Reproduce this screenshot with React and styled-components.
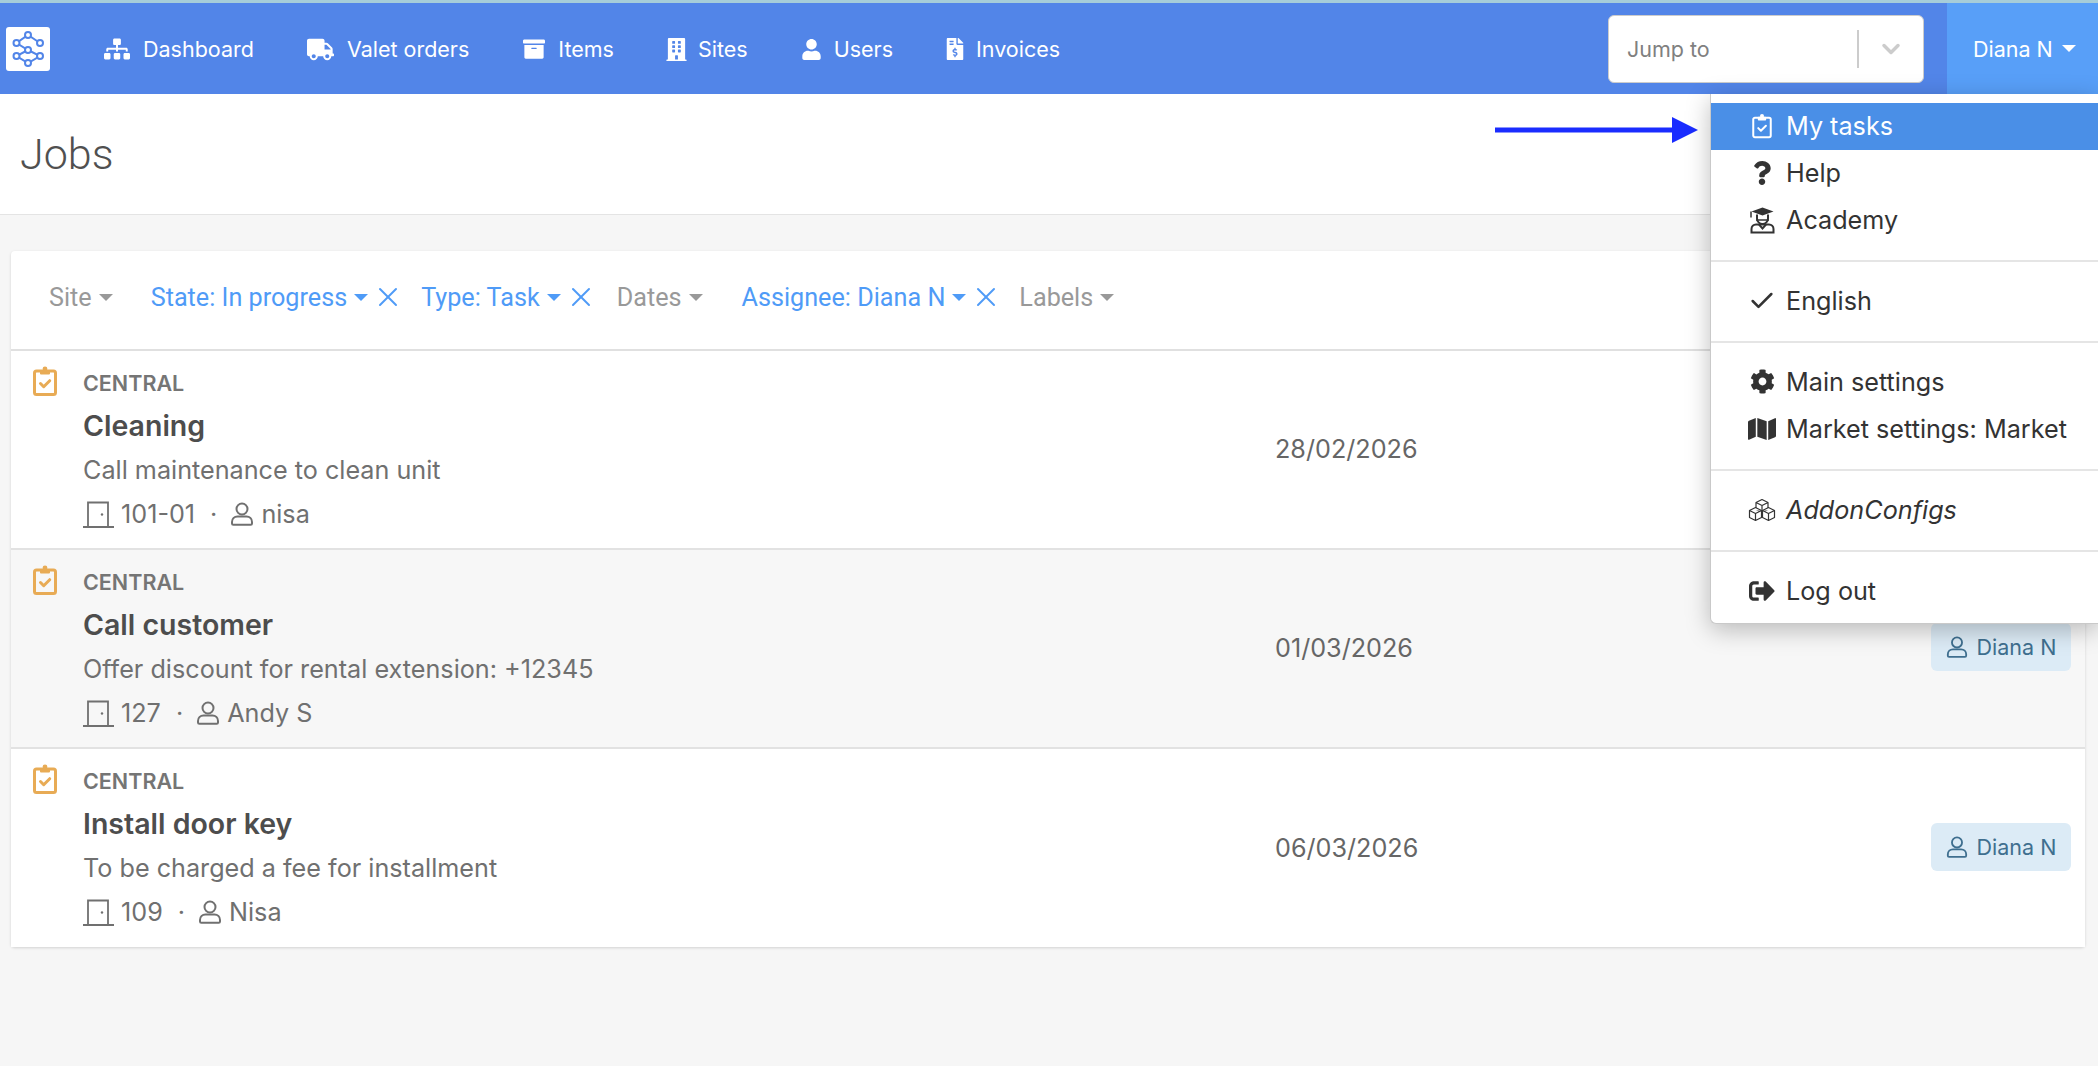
import React from 'react';
import styled, { createGlobalStyle } from 'styled-components';
import { FaSitemap, FaTruck, FaArchive, FaBuilding, FaUser, FaFileInvoiceDollar, FaQuestion, FaCog, FaMap, FaSignOutAlt } from 'react-icons/fa';
import { Check, X, ChevronDown } from 'lucide-react';

const GlobalStyle = createGlobalStyle`
  html, body { margin: 0; padding: 0; background: #f6f6f6; }
  body { font-family: Inter, "Liberation Sans", sans-serif; }
  * { box-sizing: border-box; }
`;

const Page = styled.div`
  position: relative;
  min-height: 1066px;
  overflow: hidden;
`;

const TopStrip = styled.div`
  height: 3px;
  background: #a6cdd9;
`;

const NavBar = styled.nav`
  display: flex;
  align-items: center;
  height: 91px;
  padding: 1px 0 0 6px;
  background: #5285e8;
`;

const LogoBox = styled.div`
  display: flex;
  width: 44px;
  height: 44px;
  margin-right: 54px;
  background: #fff;
  border-radius: 3px;
`;

const NavItem = styled.a`
  display: flex;
  align-items: center;
  gap: 13px;
  margin-right: 54px;
  color: #fff;
  font-size: 21.5px;
  white-space: nowrap;
`;

const NavIcon = styled.span`
  display: flex;
  justify-content: center;
  width: ${(p) => p.$w}px;
  svg {
    flex-shrink: 0;
  }
`;

const Spacer = styled.div`
  flex: 1;
`;

const JumpBox = styled.div`
  display: flex;
  align-items: center;
  width: 316px;
  height: 68px;
  margin-right: 23px;
  padding-left: 18px;
  background: #fff;
  border: 1px solid #ccc;
  border-radius: 6px;
  color: #808080;
  font-size: 21.5px;
`;

const JumpLabel = styled.span`
  flex: 1;
`;

const JumpSep = styled.span`
  width: 2px;
  height: 38px;
  background: #ccc;
`;

const JumpChevron = styled.span`
  display: flex;
  justify-content: center;
  width: 64px;
  color: #ccc;
`;

const UserButton = styled.div`
  display: flex;
  align-self: stretch;
  align-items: center;
  gap: 9px;
  width: 151px;
  margin-top: -1px;
  padding-left: 26px;
  background: #589ff8;
  color: #fff;
  font-size: 21.5px;
`;

const Caret = styled.span`
  width: 0;
  height: 0;
  border-left: 7px solid transparent;
  border-right: 7px solid transparent;
  border-top: 7px solid currentColor;
`;

const PageHeader = styled.header`
  display: flex;
  align-items: center;
  height: 121px;
  padding-left: 20px;
  background: #fff;
  border-bottom: 1px solid #e4e4e4;
`;

const PageTitle = styled.h1`
  margin: 0;
  color: #505050;
  font-family: Roboto, sans-serif;
  font-size: 43px;
  font-weight: 300;
`;

const Panel = styled.section`
  margin: 36px 13px 0 11px;
  background: #fff;
  border-radius: 4px;
  box-shadow: 0 1px 3px rgba(0, 0, 0, 0.15);
`;

const FilterBar = styled.div`
  display: flex;
  align-items: center;
  height: 100px;
  padding: 0 0 6px 38px;
  border-bottom: 2px solid #e0e0e0;
  font-family: Roboto, sans-serif;
  font-size: 25.2px;
`;

const Filter = styled.div`
  display: flex;
  align-items: center;
  gap: 7px;
  margin-right: ${(p) => p.$space}px;
  color: ${(p) => (p.$active ? '#4f9bf7' : '#999')};
  white-space: nowrap;
`;

const ClearIcon = styled(X)`
  margin: 0 -8px 0 -3px;
`;

const JobRow = styled.article`
  display: grid;
  grid-template-columns: 72px 1192px 1fr auto;
  align-items: center;
  height: ${(p) => (p.$last ? 198 : 199)}px;
  padding-right: 14px;
  background: ${(p) => (p.$shaded ? '#f7f7f7' : '#fff')};
  border-bottom: ${(p) => (p.$last ? 'none' : '2px solid #e2e2e2')};
`;

const JobIcon = styled.div`
  align-self: start;
  padding: 15px 0 0 22px;
  color: #e8ab55;
`;

const JobBody = styled.div`
  display: flex;
  flex-direction: column;
  align-self: start;
  padding-top: 10px;
  color: #707070;
`;

const Market = styled.div`
  height: 43px;
  line-height: 45px;
  font-size: 21.5px;
  font-weight: 600;
  color: #757575;
`;

const JobTitle = styled.div`
  height: 44px;
  line-height: 44px;
  color: #4d4d4d;
  font-size: 28.5px;
  font-weight: 600;
`;

const JobText = styled.div`
  height: 44px;
  line-height: 44px;
  font-size: 25.2px;
`;

const JobMeta = styled.div`
  display: flex;
  align-items: center;
  gap: 7px;
  height: 44px;
  font-size: 25.2px;
`;

const MetaDot = styled.span`
  margin: 0 6px 0 8px;
`;

const JobDate = styled.div`
  margin-bottom: 1px;
  color: #666;
  font-size: 25.2px;
`;

const Assignee = styled.div`
  display: flex;
  align-items: center;
  justify-content: center;
  gap: 9px;
  width: 140px;
  height: 48px;
  margin-bottom: 3px;
  background: #dcebf6;
  border-radius: 6px;
  color: #3f6f8f;
  font-size: 21.5px;
`;

const Dropdown = styled.div`
  position: absolute;
  top: 94px;
  right: 0;
  width: 388px;
  height: 530px;
  padding: 9px 0 8px;
  background: #fff;
  border-left: 1px solid #c9c9c9;
  border-bottom: 1px solid #c9c9c9;
  border-bottom-left-radius: 6px;
  box-shadow: 0 6px 24px rgba(0, 0, 0, 0.25);
`;

const MenuItem = styled.div`
  display: flex;
  align-items: center;
  gap: 10px;
  height: 47px;
  padding: 0 0 2px 37px;
  background: ${(p) => (p.$active ? '#4a8fe7' : 'transparent')};
  color: ${(p) => (p.$active ? '#fff' : '#333')};
  font-size: 25.2px;
  font-style: ${(p) => (p.$italic ? 'italic' : 'normal')};
  white-space: nowrap;
`;

const MenuIcon = styled.span`
  display: flex;
  justify-content: center;
  width: 28px;
`;

const MenuDivider = styled.div`
  height: 2px;
  margin: 16px 0;
  background: #e5e5e5;
`;

const PointerArrow = styled.svg`
  position: absolute;
  top: 117px;
  left: 1495px;
`;

function ClipboardIcon({ width = 24, height = 30, strokeWidth = 3 }) {
  return (
    <svg width={width} height={height} viewBox="0 0 24 30" fill="none" stroke="currentColor" strokeWidth={strokeWidth} strokeLinejoin="round" strokeLinecap="round">
      <rect x="1.500" y="5" width="21" height="23.500" rx="2" />
      <path d="M8 5h8v2.500H8z" fill="currentColor" strokeWidth="2" />
      <circle cx="12" cy="3" r="2.400" fill="currentColor" stroke="none" />
      <path d="M7.500 17.500l3.200 3.200 6-6" />
    </svg>
  );
}

function DoorIcon() {
  return (
    <svg width="31" height="27" viewBox="0 0 31 27" fill="none" stroke="currentColor" strokeWidth="1.800">
      <path d="M0 26h31M5 26V1.500h20V26" />
      <circle cx="19" cy="13.500" r="1.200" fill="currentColor" stroke="none" />
    </svg>
  );
}

function PersonIcon({ size = 24 }) {
  return (
    <svg width={size} height={size} viewBox="0 0 24 24" fill="none" stroke="currentColor" strokeWidth="2">
      <circle cx="12" cy="7" r="5.500" />
      <path d="M2 20c0-3.500 2.500-5.500 5.500-5.500h9c3 0 5.500 2 5.500 5.500v1.500c0 .8-.6 1.300-1.300 1.300H3.300C2.600 22.800 2 22.300 2 21.500z" />
    </svg>
  );
}

function AcademyIcon() {
  return (
    <svg width="27" height="28" viewBox="0 0 27 28" fill="none" stroke="#333" strokeWidth="2">
      <path d="M13.500 1.500l11 4-11 4-11-4z" fill="#333" stroke="none" />
      <path d="M2 5.500v6" strokeWidth="1.500" />
      <path d="M8 8.500v4a5.500 5.500 0 0 0 11 0v-4" />
      <path d="M7 14h13" strokeWidth="1.500" />
      <path d="M2.500 26.500v-3.500c0-2.500 2-4.500 4.500-4.500h13c2.500 0 4.500 2 4.500 4.500v3.500z" />
      <path d="M10 18.500l3.500 4 3.500-4" />
    </svg>
  );
}

function CubesIcon() {
  const cube = 'M0 -6.500L6 -3.500V3.500L0 6.500L-6 3.500V-3.500zM-6 -3.500L0 -.5L6 -3.500M0 -.5V6.500';
  return (
    <svg width="28" height="24" viewBox="0 0 28 24" fill="none" stroke="#333" strokeWidth="1.200" strokeLinejoin="round">
      <path d={cube} transform="translate(14 8)" />
      <path d={cube} transform="translate(7.500 16)" fill="#fff" />
      <path d={cube} transform="translate(20.500 16)" fill="#fff" />
    </svg>
  );
}

function LogoIcon() {
  return (
    <svg width="44" height="44" viewBox="0 0 44 44" fill="none" stroke="#5285e8" strokeWidth="2">
      <path d="M34 16L22 8 10.500 16 22 23 34 29 22 36 10.500 29 22 23" />
      <g fill="#fff">
        <circle cx="22" cy="8" r="3" />
        <circle cx="10.500" cy="16" r="3" />
        <circle cx="34" cy="16" r="3" />
        <circle cx="22" cy="23" r="3" />
        <circle cx="10.500" cy="29" r="3" />
        <circle cx="34" cy="29" r="3" />
        <circle cx="22" cy="36" r="3" />
      </g>
    </svg>
  );
}

const navItems = [
  { label: 'Dashboard', width: 26, icon: <FaSitemap size={26} /> },
  { label: 'Valet orders', width: 26, icon: <FaTruck size={27} /> },
  { label: 'Items', width: 22, icon: <FaArchive size={22} /> },
  { label: 'Sites', width: 17, icon: <FaBuilding size={23} /> },
  { label: 'Users', width: 19, icon: <FaUser size={21} /> },
  { label: 'Invoices', width: 16, icon: <FaFileInvoiceDollar size={22} /> },
];

const filters = [
  { label: 'Site', space: 38 },
  { label: 'State: In progress', active: true, space: 25 },
  { label: 'Type: Task', active: true, space: 28 },
  { label: 'Dates', space: 39 },
  { label: 'Assignee: Diana N', active: true, space: 25 },
  { label: 'Labels', space: 0 },
];

const jobs = [
  { title: 'Cleaning', text: 'Call maintenance to clean unit', unit: '101-01', person: 'nisa', date: '28/02/2026' },
  { title: 'Call customer', text: 'Offer discount for rental extension: +12345', unit: '127', person: 'Andy S', date: '01/03/2026' },
  { title: 'Install door key', text: 'To be charged a fee for installment', unit: '109', person: 'Nisa', date: '06/03/2026' },
];

export default function App() {
  return (
    <Page>
      <GlobalStyle />
      <TopStrip />
      <NavBar>
        <LogoBox><LogoIcon /></LogoBox>
        {navItems.map((item) => (
          <NavItem key={item.label}>
            <NavIcon $w={item.width}>{item.icon}</NavIcon>
            {item.label}
          </NavItem>
        ))}
        <Spacer />
        <JumpBox>
          <JumpLabel>Jump to</JumpLabel>
          <JumpSep />
          <JumpChevron><ChevronDown size={28} strokeWidth={3} /></JumpChevron>
        </JumpBox>
        <UserButton>Diana N <Caret /></UserButton>
      </NavBar>
      <PageHeader><PageTitle>Jobs</PageTitle></PageHeader>
      <Panel>
        <FilterBar>
          {filters.map((f) => (
            <Filter key={f.label} $active={f.active} $space={f.space}>
              {f.label}
              <Caret />
              {f.active && <ClearIcon size={32} strokeWidth={1.500} />}
            </Filter>
          ))}
        </FilterBar>
        {jobs.map((job, index) => (
          <JobRow key={job.title} $shaded={index === 1} $last={index === 2}>
            <JobIcon><ClipboardIcon /></JobIcon>
            <JobBody>
              <Market>CENTRAL</Market>
              <JobTitle>{job.title}</JobTitle>
              <JobText>{job.text}</JobText>
              <JobMeta>
                <DoorIcon /> {job.unit}
                <MetaDot>·</MetaDot>
                <PersonIcon /> {job.person}
              </JobMeta>
            </JobBody>
            <JobDate>{job.date}</JobDate>
            <Assignee><PersonIcon size={22} />Diana N</Assignee>
          </JobRow>
        ))}
      </Panel>
      <PointerArrow width="203" height="26" viewBox="0 0 203 26">
        <rect x="0" y="10.500" width="178" height="5" fill="#1a2cff" />
        <path d="M177 0l26 13-26 13z" fill="#1a2cff" />
      </PointerArrow>
      <Dropdown>
        <MenuItem $active><MenuIcon><ClipboardIcon width={20} height={26} strokeWidth={2.400} /></MenuIcon>My tasks</MenuItem>
        <MenuItem><MenuIcon><FaQuestion size={24} /></MenuIcon>Help</MenuItem>
        <MenuItem><MenuIcon><AcademyIcon /></MenuIcon>Academy</MenuItem>
        <MenuDivider />
        <MenuItem><MenuIcon><Check size={28} strokeWidth={2.200} /></MenuIcon>English</MenuItem>
        <MenuDivider />
        <MenuItem><MenuIcon><FaCog size={25} /></MenuIcon>Main settings</MenuItem>
        <MenuItem><MenuIcon><FaMap size={28} /></MenuIcon>Market settings: Market</MenuItem>
        <MenuDivider />
        <MenuItem $italic><MenuIcon><CubesIcon /></MenuIcon>AddonConfigs</MenuItem>
        <MenuDivider />
        <MenuItem><MenuIcon><FaSignOutAlt size={26} /></MenuIcon>Log out</MenuItem>
      </Dropdown>
    </Page>
  );
}
